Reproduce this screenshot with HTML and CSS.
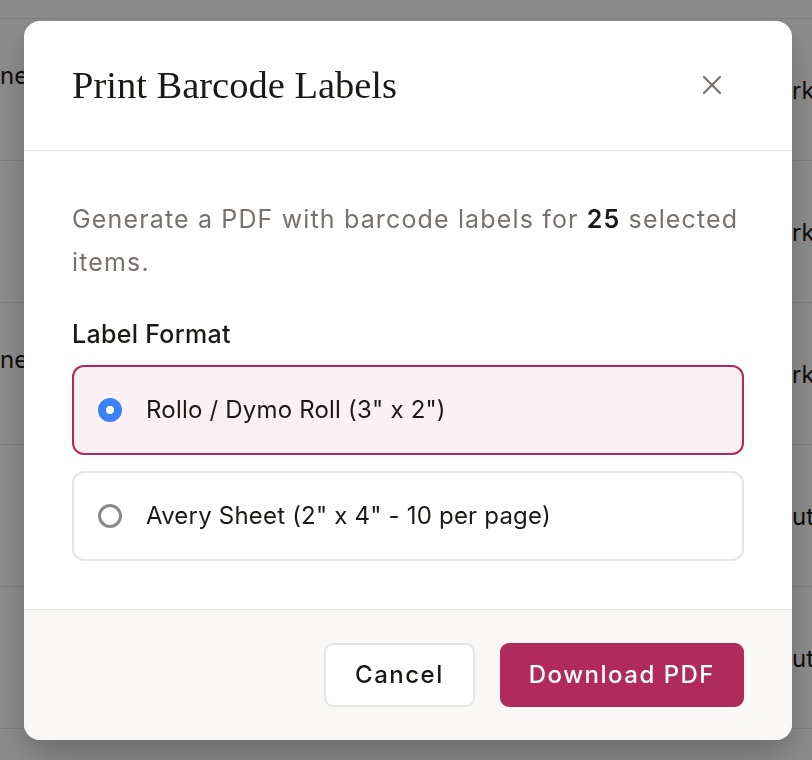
FILE: index.html
```html
<!DOCTYPE html>
<html lang="en">
<head>
<meta charset="utf-8">
<title>Print Barcode Labels</title>
<link rel="stylesheet" href="styles.css">
</head>
<body>
<div class="page">
  <div class="table-head"></div>
  <div class="row"><span class="cell-left two">ne</span><span class="cell-right">rk</span></div>
  <div class="row"><span class="cell-left"></span><span class="cell-right">rk</span></div>
  <div class="row"><span class="cell-left two">ne</span><span class="cell-right">rk</span></div>
  <div class="row"><span class="cell-left"></span><span class="cell-right">uti</span></div>
  <div class="row"><span class="cell-left"></span><span class="cell-right">uti</span></div>
  <div class="row row-last"></div>
</div>

<div class="overlay">
  <div class="modal" role="dialog" aria-labelledby="modal-title">
    <div class="modal-header">
      <h2 class="modal-title" id="modal-title">Print Barcode Labels</h2>
      <button class="close-btn" aria-label="Close">
        <svg width="20" height="20" viewBox="0 0 20 20" aria-hidden="true">
          <path d="M2 2 L18 18 M18 2 L2 18" stroke="#78716c" stroke-width="2.2" stroke-linecap="round" fill="none"/>
        </svg>
      </button>
    </div>
    <div class="modal-body">
      <p class="desc">Generate a PDF with barcode labels for <strong>25</strong> selected items.</p>
      <div class="field-label">Label Format</div>
      <div class="options">
        <label class="option selected">
          <span class="radio checked"></span>
          <span class="option-text">Rollo / Dymo Roll (3" x 2")</span>
        </label>
        <label class="option">
          <span class="radio"></span>
          <span class="option-text">Avery Sheet (2" x 4" - 10 per page)</span>
        </label>
      </div>
    </div>
    <div class="modal-footer">
      <button class="btn btn-secondary">Cancel</button>
      <button class="btn btn-primary">Download PDF</button>
    </div>
  </div>
</div>
</body>
</html>
```

FILE: styles.css
```css
* { box-sizing: border-box; }

html, body {
  margin: 0;
  padding: 0;
}

body {
  font-family: Inter, "Noto Sans", "DejaVu Sans", sans-serif;
  background: #ffffff;
  color: #1c1917;
  width: 812px;
  height: 760px;
  overflow: hidden;
}

/* background table */
.page {
  width: 812px;
  height: 760px;
  overflow: hidden;
}

.table-head {
  height: 19px;
  border-bottom: 1px solid #e7e5e4;
}

.row {
  height: 142px;
  border-bottom: 1px solid #e7e5e4;
  display: flex;
  justify-content: space-between;
  align-items: center;
  font-size: 24px;
  color: #1c1917;
}

.row.row-last {
  height: 31px;
  border-bottom: 0;
}

.cell-left.two {
  padding-bottom: 28px;
}

.cell-right {
  width: 20px;
  white-space: nowrap;
  padding-top: 2px;
}

/* overlay & modal */
.overlay {
  position: fixed;
  inset: 0;
  padding-left: 4px;
  background: rgba(0, 0, 0, 0.45);
  display: flex;
  align-items: center;
  justify-content: center;
}

.modal {
  width: 768px;
  background: #ffffff;
  border-radius: 16px;
  overflow: hidden;
  box-shadow: 0 20px 40px rgba(0, 0, 0, 0.18), 0 8px 16px rgba(0, 0, 0, 0.08);
}

.modal-header {
  display: flex;
  align-items: center;
  justify-content: space-between;
  padding: 46px 48px 47px 48px;
  border-bottom: 1px solid #e7e5e4;
}

.modal-title {
  margin: 0;
  font-family: "Liberation Serif", "DejaVu Serif", serif;
  font-weight: 400;
  font-size: 38.5px;
  line-height: 36px;
  color: #1c1917;
}

.close-btn {
  width: 36px;
  height: 36px;
  margin-right: 14px;
  padding: 0;
  border: 0;
  background: transparent;
  display: flex;
  align-items: center;
  justify-content: center;
}

.modal-body {
  padding: 47px 48px 48px 48px;
}

.desc {
  margin: 0;
  font-size: 25px;
  line-height: 43px;
  letter-spacing: 1.15px;
  color: #78716c;
}

.desc strong {
  color: #1c1917;
  font-weight: 600;
}

.field-label {
  margin-top: 34px;
  font-size: 25px;
  line-height: 32px;
  font-weight: 500;
  letter-spacing: 0.3px;
  color: #1c1917;
}

.options {
  margin-top: 15px;
  display: flex;
  flex-direction: column;
  gap: 16px;
}

.option {
  display: flex;
  align-items: center;
  gap: 24px;
  height: 90px;
  padding: 0 24px;
  border: 2px solid #e7e5e4;
  border-radius: 12px;
  background: #ffffff;
  font-size: 24px;
  line-height: 36px;
  letter-spacing: 0.2px;
  color: #1c1917;
}

.option.selected {
  border-color: #b02a5b;
  background: #fdf0f4;
}

.radio {
  width: 24px;
  height: 24px;
  border-radius: 50%;
  border: 3px solid #8a8a8a;
  background: #ffffff;
  flex: none;
}

.radio.checked {
  border: 8.5px solid #3b82f6;
  background: #ffffff;
}

.modal-footer {
  display: flex;
  justify-content: flex-end;
  gap: 25px;
  padding: 33px 48px 33px 48px;
  background: #f9f8f6;
  border-top: 1px solid #e7e5e4;
}

.btn {
  height: 64px;
  padding: 0 28px;
  border-radius: 9px;
  font-family: Inter, "Noto Sans", "DejaVu Sans", sans-serif;
  font-size: 24px;
  font-weight: 500;
  letter-spacing: 1.5px;
}

.btn-secondary {
  background: #ffffff;
  border: 2px solid #e7e5e4;
  color: #1c1917;
  padding: 0 29px;
}

.btn-primary {
  background: #b02a5b;
  border: 2px solid #b02a5b;
  color: #ffffff;
  padding: 0 27px;
}
```
